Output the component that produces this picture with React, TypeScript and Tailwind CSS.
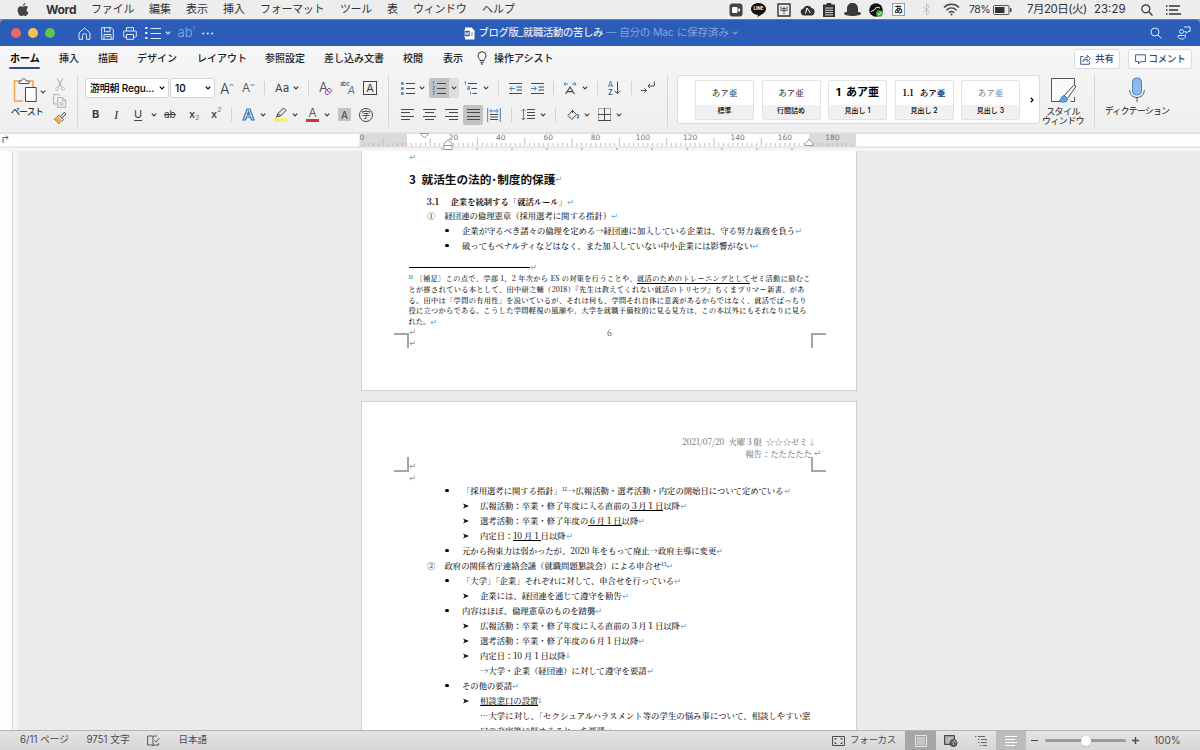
import type { ReactNode } from 'react';
import clsx from 'clsx';

interface BoxProps {
  className?: string;
  children?: ReactNode;
}

interface IconProps {
  w: number;
  h: number;
  className?: string;
  children: ReactNode;
}

const BLUE = '#3f83bd';

const Icon = ({ w, h, className, children }: IconProps) => (
  <svg
    width={w}
    height={h}
    viewBox={`0 0 ${w} ${h}`}
    fill="none"
    stroke="currentColor"
    strokeWidth={1}
    className={clsx('shrink-0', className)}
  >
    {children}
  </svg>
);

const Slot = ({ className, children }: BoxProps) => (
  <div className={clsx('flex h-full shrink-0 items-center whitespace-nowrap', className)}>{children}</div>
);

const Chevron = ({ className }: { className?: string }) => (
  <Icon w={6} h={4} className={className}>
    <path d="M.8.7 3 3 5.2.7" strokeWidth={1.2} />
  </Icon>
);

const Divider = () => <div className="h-[14px] w-px bg-[#d2d2d2]" />;

/* ---------- macOS menu bar ---------- */

const MenuBar = () => (
  <div className="flex h-[19px] shrink-0 items-center bg-[#ededed] pl-[17px] text-[11px] text-[#333]">
    <Slot className="w-[29px]">
      <svg width="12" height="14" viewBox="0 0 12 14" fill="#444">
        <path d="M8.3 0c.1 1.4-1 2.7-2.3 2.8C5.8 1.5 7 .2 8.3 0zM6.2 3.7c.6 0 1.3-.6 2.4-.6 1 0 1.9.5 2.4 1.3-2 1.2-1.7 4.1.5 4.9-.5 1.5-1.6 3.7-2.9 3.7-.8 0-1.2-.5-2.2-.5s-1.4.5-2.2.5C2.5 13 .6 9.9.6 7.2.6 4.6 2.2 3.2 3.9 3.2c1 0 1.7.5 2.3.5z" />
      </svg>
    </Slot>
    <Slot className="w-[45px] text-[12px] font-bold tracking-[-0.3px]">Word</Slot>
    <Slot className="w-[58px] tracking-[-0.2px]">ファイル</Slot>
    <Slot className="w-[37px]">編集</Slot>
    <Slot className="w-[37px]">表示</Slot>
    <Slot className="w-[37px]">挿入</Slot>
    <Slot className="w-[80px] tracking-[-0.3px]">フォーマット</Slot>
    <Slot className="w-[47px] tracking-[-0.4px]">ツール</Slot>
    <Slot className="w-[26px]">表</Slot>
    <Slot className="w-[69px] tracking-[-0.3px]">ウィンドウ</Slot>
    <Slot className="w-[247px]">ヘルプ</Slot>
    <Slot className="w-[22px]">
      <svg width="14" height="14" viewBox="0 0 14 14">
        <rect x=".5" y=".5" width="13" height="13" rx="3" fill="#444" />
        <rect x="3" y="4" width="5.5" height="6" rx="1.2" fill="#fff" />
        <path d="M9 6.5 11 5v4L9 7.8z" fill="#fff" />
      </svg>
    </Slot>
    <Slot className="relative w-[26px]">
      <svg width="15" height="14" viewBox="0 0 15 14">
        <path d="M7.5 0C3.4 0 0 2.6 0 5.9c0 3 2.7 5.4 6.3 5.8.7.2.4 1.3.3 2.3 3.3-1.7 8.4-4.5 8.4-8.1C15 2.6 11.6 0 7.5 0z" fill="#111" />
      </svg>
      <span className="absolute left-[2.5px] top-[6.5px] text-[4.5px] font-bold leading-none text-white">LINE</span>
    </Slot>
    <Slot className="w-[23px]">
      <Icon w={14} h={14}>
        <path d="M1 1h12v12H1z" strokeWidth={1.4} />
        <path d="M4 3.5v4M10 3.5v4M7 3.5V11M4 7.5h6M5 5.5h4" strokeWidth={0.8} />
      </Icon>
    </Slot>
    <Slot className="w-[23px]">
      <svg width="15" height="12" viewBox="0 0 15 12">
        <path d="M4 11.5a3.5 3.5 0 0 1-.6-6.9A4.5 4.5 0 0 1 11.5 4a3.8 3.8 0 0 1-.3 7.5z" fill="#333" />
        <path d="M5.5 9.5 7 4l3.5 5" stroke="#fff" fill="none" />
      </svg>
    </Slot>
    <Slot className="w-[21px]">
      <svg width="12" height="14" viewBox="0 0 12 14">
        <path d="M0 1.5h3.5a2.5 2 0 0 1 5 0H12V14H0z" fill="#333" />
        <path d="M2 5h8M2 7.3h8M2 9.6h8M2 11.9h8" stroke="#eee" strokeWidth=".9" />
      </svg>
    </Slot>
    <Slot className="w-[25px]">
      <svg width="17" height="13" viewBox="0 0 17 13" fill="#3a3a3a">
        <path d="M3 9V5.500C3 2 5.5 0 8.500 0S14 2 14 5.500V9c2 0 3 .5 3 1.500C17 12 13 13 8.500 13S0 12 0 10.500C0 9.500 1 9 3 9z" />
      </svg>
    </Slot>
    <Slot className="w-[23px]">
      <svg width="14" height="14" viewBox="0 0 14 14">
        <circle cx="7" cy="7" r="6.8" fill="#111" />
        <path d="M2 9c1-2 3-1 4-3s3-2 5-1" stroke="#fff" fill="none" />
        <circle cx="10.5" cy="10.5" r="3.3" fill="#44b04c" />
        <path d="m9 10.5 1.2 1.2 2-2.4" stroke="#fff" fill="none" />
      </svg>
    </Slot>
    <Slot className="w-[30px]">
      <div className="flex size-[13px] items-center justify-center border border-[#8aa0b8] bg-white text-[9px] font-medium leading-none text-black">あ</div>
    </Slot>
    <Slot className="w-[21px] text-[#c2c2c2]">
      <Icon w={9} h={13}>
        <path d="m1 3.5 6.5 6L4.500 12V1l3 2.500L1 9.500" />
      </Icon>
    </Slot>
    <Slot className="w-[26px] text-[#444]">
      <Icon w={17} h={13}>
        <path d="M1 4.500c4-4.300 11-4.300 15 0M3.500 7.200c3-3 7-3 10 0M6 9.700c1.500-1.500 3.500-1.500 5 0" strokeWidth={1.5} />
        <circle cx="8.5" cy="11.5" r="1" fill="currentColor" stroke="none" />
      </Icon>
    </Slot>
    <Slot className="w-[24px] text-[10.5px] tracking-[-0.5px]">78%</Slot>
    <Slot className="w-[34px]">
      <svg width="19" height="10" viewBox="0 0 19 10">
        <rect x=".5" y=".5" width="15.5" height="9" rx="1" fill="none" stroke="#555" />
        <path d="M2 2h9.500v6H2zM17 3.200h1.500v3.600H17z" fill="#333" />
      </svg>
    </Slot>
    <Slot className="w-[67px] text-[11.5px] tracking-[-0.5px]">7月20日(火)</Slot>
    <Slot className="w-[47px] text-[11.5px]">23:29</Slot>
    <Slot className="w-[25px]">
      <Icon w={12} h={12}>
        <circle cx="4.8" cy="4.8" r="4" strokeWidth={1.2} />
        <path d="m7.8 7.8 3.700 3.700" strokeWidth={1.3} />
      </Icon>
    </Slot>
    <Slot>
      <Icon w={15} h={10}>
        <path d="M0 1h1.500M0 5h1.500M0 9h1.500M3 1h11M3 5h9M3 9h12" strokeWidth={1.4} />
      </Icon>
    </Slot>
  </div>
);

/* ---------- window title bar ---------- */

const TitleBar = () => (
  <div className="flex h-[27px] shrink-0 items-center rounded-t-[5px] border-t border-[#5c7fc0] bg-[#2a5cb8] pl-[10.5px] text-[#dfe8f8]">
    <Slot className="w-[67px] gap-[6.5px]">
      <span className="size-[10.5px] rounded-full bg-[#ec6a5f]" />
      <span className="size-[10.5px] rounded-full bg-[#f4bf58]" />
      <span className="size-[10.5px] rounded-full bg-[#61c454]" />
    </Slot>
    <Slot className="w-[23px]">
      <Icon w={13} h={13}>
        <path d="M1 6 6.500.900 12 6v6.300H8.500V8.500a2 2 0 0 0-4 0v3.800H1z" />
      </Icon>
    </Slot>
    <Slot className="w-[22px]">
      <Icon w={13} h={13}>
        <path d="M.7.700h9.600l2 2v9.600H.7zM3.500.700v4h5.500v-4M3 12V7.500h7V12M4.500 9.500h4" />
      </Icon>
    </Slot>
    <Slot className="w-[22px]">
      <Icon w={14} h={13}>
        <path d="M3.500 4V.7h7V4M3.500 10H1.200L.7 9.500v-5L1.200 4h11.600l.5.500v5l-.5.500h-2.300M3.500 7.500h7v4.800h-7z" />
      </Icon>
    </Slot>
    <Slot className="w-[20px]">
      <Icon w={16} h={14}>
        <path d="M0 2h2.500M0 7h2.500M0 12h2.500" strokeWidth={2.2} />
        <path d="M5.500 2.500H16M5.500 7.500H16M5.500 12.500H16" />
      </Icon>
    </Slot>
    <Slot className="w-[13px]">
      <Chevron />
    </Slot>
    <Slot className="w-[24px] text-[13px] font-light text-[#93afe2]">
      ab<span className="mb-[9px] text-[6px] leading-none">1</span>
    </Slot>
    <Slot className="w-[262px]">
      <svg width="12" height="3" viewBox="0 0 12 3" fill="currentColor">
        <circle cx="1.3" cy="1.5" r="1.1" />
        <circle cx="5.8" cy="1.5" r="1.1" />
        <circle cx="10.3" cy="1.5" r="1.1" />
      </svg>
    </Slot>
    <Slot className="w-[15px]">
      <svg width="11" height="13" viewBox="0 0 11 13">
        <path d="M1 .5h6.500l3 3v9H1z" fill="#fff" />
        <path d="M0 3.500h6v6H0z" fill="#2a5cb8" stroke="#fff" strokeWidth=".6" />
        <path d="m1.300 5 .8 3 .9-2.500.9 2.500.8-3" fill="none" stroke="#fff" strokeWidth=".7" />
        <path d="M7 6h2M7 8h2" stroke="#2a5cb8" strokeWidth=".7" />
      </svg>
    </Slot>
    <Slot className="w-[127.5px] text-[10.3px] font-medium tracking-[-0.3px]">ブログ版_就職活動の苦しみ</Slot>
    <Slot className="w-[125.5px] text-[10.5px] tracking-[-0.15px] text-[#86a3db]">— 自分の Mac に保存済み</Slot>
    <Slot className="w-[418px] text-[#86a3db]">
      <Chevron />
    </Slot>
    <Slot className="w-[27px]">
      <Icon w={12} h={12}>
        <circle cx="5" cy="5" r="4" />
        <path d="m8 8 3.500 3.500" />
      </Icon>
    </Slot>
    <Slot>
      <Icon w={14} h={14}>
        <circle cx="4.5" cy="5.5" r="2" />
        <path d="M1 9.500h7.500v1c0 1.500-1.500 2.500-3.700 2.500S1 12 1 10.500zM7 1h6v4.500h-2L9 7.500v-2H7.500" />
      </Icon>
    </Slot>
  </div>
);

/* ---------- ribbon ---------- */

const Tabs = () => (
  <div className="flex h-[24px] shrink-0 items-center pl-[10px] text-[10px] font-medium text-[#222]">
    <Slot className="relative w-[49px] font-bold text-black">
      ホーム
      <span className="absolute bottom-[1px] left-[-1px] h-[2px] w-[31px] rounded-full bg-[#2a4d8f]" />
    </Slot>
    <Slot className="w-[39px]">挿入</Slot>
    <Slot className="w-[39px]">描画</Slot>
    <Slot className="w-[60px]">デザイン</Slot>
    <Slot className="w-[68px]">レイアウト</Slot>
    <Slot className="w-[59px]">参照設定</Slot>
    <Slot className="w-[79px]">差し込み文書</Slot>
    <Slot className="w-[40px]">校閲</Slot>
    <Slot className="w-[34px]">表示</Slot>
    <Slot className="w-[17px]">
      <Icon w={10} h={14}>
        <path d="M3 9.500C3 8 1 7 1 4.700a4 4 0 0 1 8 0C9 7 7 8 7 9.500zM3.300 11.300h3.400M3.800 13h2.400" strokeWidth={0.9} />
      </Icon>
    </Slot>
    <Slot className="w-[580px]">操作アシスト</Slot>
    <div className="mt-[3px] flex gap-[8px] self-start text-[9.5px] text-[#2d4b7c]">
      <div className="flex h-[20px] w-[46px] items-center justify-center gap-[4px] rounded-[3px] border border-[#dcdcdc] bg-white">
        <Icon w={11} h={11}>
          <path d="M3.500 2.500H.7v7.800h8.600V7.500M3 7.500c.2-2.800 2-4 4.300-4V1.200l3 3.300-3 3V5.300C5.500 5.300 4 6 3 7.500z" strokeWidth={0.9} />
        </Icon>
        共有
      </div>
      <div className="flex h-[20px] w-[64px] items-center justify-center gap-[3px] rounded-[3px] border border-[#dcdcdc] bg-white tracking-[-0.3px]">
        <Icon w={11} h={11}>
          <path d="M.6.800h9.800v6.800H5.500L3.500 10V7.600H.6z" strokeWidth={0.9} />
        </Icon>
        コメント
      </div>
    </div>
  </div>
);

const PasteGroup = () => (
  <div className="flex w-[78px] shrink-0 border-r border-[#d6d6d6] pl-[12px] text-[#444]">
    <div className="w-[41px] pt-[3px]">
      <div className="flex items-center gap-[2px]">
        <svg width="26" height="27" viewBox="0 0 26 27" fill="none">
          <path d="M8 3H2.500v20H11M17 3h4v6" stroke="#f0a04b" strokeWidth="1.5" />
          <path d="M7 5.500V3h2.500c0-1.400 1-2.200 2.200-2.200S14 1.600 14 3h3v2.500z" fill="#fff" stroke="#555" />
          <path d="M13.500 9.500h10.700v14H13.500z" fill="#fff" stroke="#444" />
        </svg>
        <Chevron />
      </div>
      <div className="mt-[1px] ml-[-1px] whitespace-nowrap text-[9px] leading-[12px] tracking-[-0.9px] text-black">ペースト</div>
    </div>
    <div className="flex flex-col items-center gap-[3px] pt-[3px]">
      <Icon w={10} h={13} className="text-[#aaa]">
        <path d="M2 0l4.700 9M8 0 3.300 9" />
        <circle cx="2" cy="10.7" r="1.6" stroke="#a9c8e4" />
        <circle cx="8" cy="10.7" r="1.6" stroke="#a9c8e4" />
      </Icon>
      <Icon w={14} h={14} className="text-[#b0b0b0]">
        <path d="M4.500 10H.600V.600h5l1.500 1.500M4.700 3.600h5l3 3v6.800h-8zM9.500 3.600v3.200h3.200M6.500 9h4M6.500 11h4" />
      </Icon>
      <Icon w={14} h={14}>
        <path d="m1 8 4-2.500L9 9.500 6 13z" fill="#f3a95a" stroke="#e08a2c" />
        <path d="m4.500 5.500 1.300-1.300 4.500 4.500L9 10M7.500 5.500l3.700-4.200 1.800 1.800-4 3.800" fill="#f3f3f3" />
      </Icon>
    </div>
  </div>
);

const FontGroup = () => (
  <div className="w-[311px] shrink-0 border-r border-[#d6d6d6] text-[#3a3a3a]">
    <div className="flex h-[26px] items-center pl-[7px]">
      <div className="flex h-[20px] w-[84px] items-center justify-between rounded-[3px] border border-[#d5d5d5] bg-white pr-[3px] pl-[4px] text-[10px] font-medium text-black">
        <span className="whitespace-nowrap tracking-[-0.2px]">游明朝 Regu...</span>
        <Chevron />
      </div>
      <div className="ml-[1px] flex h-[20px] w-[45px] items-center justify-between rounded-[3px] border border-[#d5d5d5] bg-white pr-[3px] pl-[4px] text-[10px] font-medium text-black">
        10
        <Chevron />
      </div>
      <Slot className="ml-[5px] w-[22px] text-[14px] font-light">
        A
        <Icon w={5} h={4} className="mb-[7px] text-[#3f83bd]">
          <path d="m.7 3 1.800-2 1.800 2" />
        </Icon>
      </Slot>
      <Slot className="w-[22px] text-[12px] font-light">
        A
        <Icon w={5} h={4} className="mb-[7px] text-[#3f83bd]">
          <path d="m.7 1 1.800 2 1.800-2" />
        </Icon>
      </Slot>
      <Slot className="w-[11px]">
        <Divider />
      </Slot>
      <Slot className="w-[18px] text-[11px] tracking-[0.5px]">Aa</Slot>
      <Slot className="w-[15px]">
        <Chevron />
      </Slot>
      <Slot className="w-[11px]">
        <Divider />
      </Slot>
      <Slot className="w-[21px] text-[13px] font-light">
        A
        <Icon w={9} h={8} className="mt-[5px] ml-[-4px] text-[#9442a8]">
          <path d="M1 5 5 1l3 2.500-4 4H2.500zM3 3l3 2.800" fill="#f3e4f7" />
        </Icon>
      </Slot>
      <Slot className="w-[23px]">
        <span className="mb-[8px] text-[6px] leading-none tracking-[-0.3px]">abc</span>
        <span className="mt-[4px] ml-[-2px] text-[11px] leading-none italic text-[#3f83bd]">A</span>
      </Slot>
      <Slot>
        <span className="flex size-[14px] items-center justify-center border border-[#444] text-[11px] leading-none">A</span>
      </Slot>
    </div>
    <div className="flex h-[27px] items-center pl-[14px] text-[12px]">
      <Slot className="w-[22px] text-[11px] font-bold">B</Slot>
      <Slot className="w-[20px] font-['Liberation_Serif'] text-[13px] italic">I</Slot>
      <Slot className="w-[17px]">
        <span className="border-b border-[#444] text-[11px] leading-[11px]">U</span>
      </Slot>
      <Slot className="w-[13px]">
        <Chevron />
      </Slot>
      <Slot className="w-[25px] text-[10px] line-through">ab</Slot>
      <Slot className="w-[22px] text-[11px] font-medium">
        x<span className="mt-[8px] text-[6.5px] text-[#3f83bd]">2</span>
      </Slot>
      <Slot className="w-[20px] text-[11px] font-medium">
        x<span className="mb-[8px] text-[6.5px] text-[#3f83bd]">2</span>
      </Slot>
      <Slot className="w-[11px]">
        <Divider />
      </Slot>
      <Slot className="w-[18px]">
        <Icon w={13} h={13} className="text-[#2f78b8]">
          <path d="M1 12 5 1h3l4 11H9.500l-1-2.800h-4l-1 2.800zM5.300 7h2.500L6.500 3.500z" fill="#d6e8f8" strokeWidth={1.2} />
        </Icon>
      </Slot>
      <Slot className="w-[14px]">
        <Chevron />
      </Slot>
      <Slot className="w-[18px]">
        <Icon w={13} h={15}>
          <path d="M0 11.500h13V15H0z" fill="#fbf15a" stroke="none" />
          <path d="m4 6.500 5.500-5.500 2.500 2.500L6.500 9zM4 6.500l-1 3 3.500-.5M3 9.500l-1.200 1.200" />
        </Icon>
      </Slot>
      <Slot className="w-[14px]">
        <Chevron />
      </Slot>
      <Slot className="w-[18px]">
        <div className="flex w-[13px] flex-col items-center">
          <span className="text-[12px] leading-[11px] font-light">A</span>
          <span className="mt-[1px] h-[3px] w-full bg-[#d0342c]" />
        </div>
      </Slot>
      <Slot className="w-[14px]">
        <Chevron />
      </Slot>
      <Slot className="w-[21px]">
        <span className="flex size-[13px] items-center justify-center bg-[#c4c4c4] text-[10px] leading-none">A</span>
      </Slot>
      <Slot>
        <span className="flex size-[14px] items-center justify-center rounded-full border border-[#444] text-[9px] leading-none">字</span>
      </Slot>
    </div>
  </div>
);

const Lines = ({ d }: { d: string }) => (
  <Icon w={13} h={13}>
    <path d={d} />
  </Icon>
);

const ParagraphGroup = () => (
  <div className="w-[279px] shrink-0 border-r border-[#d6d6d6] text-[#484848]">
    <div className="flex h-[26px] items-center pl-[12px]">
      <Slot className="w-[18px]">
        <Icon w={14} h={13}>
          <path d="M0 1.500h2.800M0 6.500h2.800M0 11.500h2.800" stroke={BLUE} strokeWidth={2.6} />
          <path d="M5 1.500h9M5 6.500h9M5 11.500h9" />
        </Icon>
      </Slot>
      <Slot className="w-[10px]">
        <Chevron />
      </Slot>
      <div className="flex h-[20px] w-[30px] rounded-[2px] bg-[#dedede]">
        <div className="flex w-[20px] items-center justify-center rounded-l-[2px] bg-[#c2c2c2]">
          <Icon w={14} h={14}>
            <path d="M.5 1 1.500.500v3M.5 5.500h2v1.500l-2 1.500h2M.5 10.500h2l-1 1.500 1 .3-.5 1.200H.5" stroke={BLUE} strokeWidth={0.8} />
            <path d="M5 2.500h9M5 7.500h9M5 12.500h9" />
          </Icon>
        </div>
        <div className="flex flex-1 items-center pl-[2px]">
          <Chevron />
        </div>
      </div>
      <Slot className="ml-[5px] w-[19px]">
        <Icon w={14} h={14}>
          <path d="m.5 1 1-.5v3M3.500 5.500h2v3h-2V7h2M6.500 11v2.500" stroke={BLUE} strokeWidth={0.9} />
          <path d="M4 2.500h9M7.500 7.500H13M8.500 12.500H13" />
        </Icon>
      </Slot>
      <Slot className="w-[15px]">
        <Chevron />
      </Slot>
      <Slot className="w-[11px]">
        <Divider />
      </Slot>
      <Slot className="w-[22px]">
        <Icon w={13} h={13}>
          <path d="M0 1.500h13M7.500 5H13M7.500 8H13M0 11.500h13" />
          <path d="M6 6.500H1M3 4.300.8 6.500 3 8.700" stroke={BLUE} />
        </Icon>
      </Slot>
      <Slot className="w-[22px]">
        <Icon w={13} h={13}>
          <path d="M0 1.500h13M7.500 5H13M7.500 8H13M0 11.500h13" />
          <path d="M0 6.500h5M3.200 4.300l2.200 2.200-2.200 2.200" stroke={BLUE} />
        </Icon>
      </Slot>
      <Slot className="w-[10px]">
        <Divider />
      </Slot>
      <Slot className="w-[19px]">
        <Icon w={14} h={13}>
          <path d="m2.500 12 4.500-7 4.500 7M4 9.700h6" strokeWidth={1.2} />
          <path d="M5 2H1M2.700.3 1 2l1.700 1.700M9 2h4M11.300.3 13 2l-1.700 1.700" stroke={BLUE} />
        </Icon>
      </Slot>
      <Slot className="w-[15px]">
        <Chevron />
      </Slot>
      <Slot className="w-[10px]">
        <Divider />
      </Slot>
      <Slot className="w-[24px]">
        <div className="flex w-[7px] flex-col items-center text-[7.5px] leading-[9px] font-medium">
          <span className="text-[#3f83bd]">A</span>
          <span className="mt-[-1px]">Z</span>
        </div>
        <Icon w={7} h={14}>
          <path d="M3.500.5v12M.8 9.800l2.700 2.900 2.700-2.900" />
        </Icon>
      </Slot>
      <Slot className="w-[10px]">
        <Divider />
      </Slot>
      <Slot>
        <Icon w={14} h={14}>
          <path d="M13.300.5V5H7M9.200 2.800 7 5l2.200 2.200M0 9.500h5.500M3.300 7.300l2.200 2.200-2.200 2.200" />
        </Icon>
      </Slot>
    </div>
    <div className="flex h-[27px] items-center pl-[12px]">
      <Slot className="w-[22px]">
        <Lines d="M0 1.500h13M0 4.500h9M0 8.500h13M0 11.500h9" />
      </Slot>
      <Slot className="w-[22px]">
        <Lines d="M0 1.500h13M2 4.500h9M0 8.500h13M2 11.500h9" />
      </Slot>
      <Slot className="w-[18px]">
        <Lines d="M0 1.500h13M4 4.500h9M0 8.500h13M4 11.500h9" />
      </Slot>
      <div className="mr-[4px] flex size-[20px] items-center justify-center rounded-[2px] bg-[#c2c2c2]">
        <Lines d="M0 1.500h13M0 4.500h13M0 8.500h13M0 11.500h13" />
      </div>
      <Slot className="w-[24px]">
        <Icon w={14} h={14}>
          <path d="M3 6.500h8M3 9h8M3 11.500h8" />
          <path d="M.7 0v14M13.300 0v14M3 3h8M4.500 1.300 2.800 3l1.700 1.700M9.500 1.300 11.200 3 9.500 4.700" stroke={BLUE} />
        </Icon>
      </Slot>
      <Slot className="w-[10px]">
        <Divider />
      </Slot>
      <Slot className="w-[19px]">
        <Icon w={14} h={13}>
          <path d="M2.500 1v11M.5 3l2-2 2 2M.5 10l2 2 2-2" stroke={BLUE} />
          <path d="M6 1.500h8M6 4.500h8M6 7.500h8M6 10.500h8" />
        </Icon>
      </Slot>
      <Slot className="w-[15px]">
        <Chevron />
      </Slot>
      <Slot className="w-[12px]">
        <Divider />
      </Slot>
      <Slot className="w-[17px]">
        <Icon w={12} h={12}>
          <path d="m1 6.500 4.500-5 4 4-4.500 5zM5.500 4V.500" />
          <path d="M10 5c1.500 1 1.500 3 .5 4.500" stroke={BLUE} strokeWidth={1.5} />
        </Icon>
      </Slot>
      <Slot className="w-[14px]">
        <Chevron />
      </Slot>
      <Slot className="w-[18px]">
        <Icon w={13} h={13}>
          <path d="M.5.500h12v12H.5z" strokeDasharray="1 1" strokeWidth={0.9} />
          <path d="M6.500 0v13M0 6.500h13M0 12.500h13" />
        </Icon>
      </Slot>
      <Slot>
        <Chevron />
      </Slot>
    </div>
  </div>
);

const serif = "font-['Noto_Serif_CJK_JP','Liberation_Serif','Noto_Sans_CJK_JP',serif]";

const styles = [
  { name: '標準', preview: 'あア亜', className: `text-[8.5px] font-medium text-[#222] ${serif}` },
  { name: '行間詰め', preview: 'あア亜', className: `text-[8.5px] font-medium text-[#222] ${serif}` },
  { name: '見出し 1', preview: '1  あア亜', className: 'text-[11px] font-bold text-black' },
  { name: '見出し 2', preview: '1.1   あア亜', className: `text-[8.5px] font-bold text-black ${serif}` },
  { name: '見出し 3', preview: 'あア亜', className: `text-[8.5px] font-medium text-[#777] ${serif}` },
];

const StyleGallery = () => (
  <div className="ml-[9px] flex h-[49px] w-[363px] shrink-0 items-center rounded-[3px] border border-[#dadada] bg-white pl-[17px]">
    <div className="flex gap-[7.5px]">
      {styles.map(style => (
        <div key={style.name} className="flex h-[40px] w-[59px] flex-col overflow-hidden rounded-[2px] border border-[#e3e3e3]">
          <div className={clsx('flex flex-1 items-center justify-center leading-none whitespace-pre', style.className)}>
            {style.preview}
          </div>
          <div className="flex h-[14px] items-center justify-center bg-[#f1f1f1] text-[7px] font-medium whitespace-nowrap text-black">
            {style.name}
          </div>
        </div>
      ))}
    </div>
    <Icon w={4} h={6} className="ml-[10px]">
      <path d="M.7.800 3 3 .7 5.200" strokeWidth={1.2} />
    </Icon>
  </div>
);

const Ribbon = () => (
  <div className="flex h-[62px] shrink-0">
    <div className="mt-[5px] flex h-[52px]">
      <PasteGroup />
      <FontGroup />
      <ParagraphGroup />
      <StyleGallery />
      <div className="flex w-[55px] shrink-0 flex-col items-center border-r border-[#d6d6d6] pt-[2px] pr-[8px] text-[9px] leading-[9px] tracking-[-0.6px] whitespace-nowrap text-[#222]">
        <svg width="27" height="27" viewBox="0 0 27 27" fill="none">
          <path d="M11 24.500H1.500v-23h23v8M24.500 20v4.500h-4" fill="#fafafa" stroke="#555" />
          <path d="m14 19 9.500-10.500c1-1 2.800 0 2 1.500L17.500 21.500z" fill="#fff" stroke="#444" />
          <path d="M14 18.500c-3 .5-2.500 4-5 5.500 3.500 1.800 9 1.300 8.500-2.500z" fill="#6aa5dc" stroke="#3a78b4" />
        </svg>
        <span className="mt-[3px]">スタイル</span>
        <span>ウィンドウ</span>
      </div>
      <div className="flex w-[84px] shrink-0 flex-col items-center pt-[2px] text-[9px] tracking-[-0.85px] whitespace-nowrap text-[#222]">
        <svg width="16" height="27" viewBox="0 0 16 27" fill="none">
          <rect x="3.5" y="1" width="9" height="17" rx="4" fill="#8bbbe8" stroke="#4a86bf" />
          <path d="M.7 13c0 10 14.600 10 14.600 0M8 21v4" stroke="#555" />
        </svg>
        <span className="mt-[1px] leading-[12px]">ディクテーション</span>
      </div>
    </div>
  </div>
);

/* ---------- ruler ---------- */

const Ruler = () => (
  <svg width="1200" height="19" viewBox="0 0 1200 19" className="shrink-0">
    <path d="M0 0h1200v19H0z" fill="#f5f5f5" />
    <path d="M0 2h1200v12.500H0z" fill="#fefefe" />
    <path d="M0 1h1200" stroke="#cfcfcf" />
    <path d="M0 15h1200" stroke="#dcdcdc" />
    <path d="M359.500 2H407v13h-47.500zM809 2h47v13h-47z" fill="#dadada" />
    <path d="M3 11V5.500h5M6 3.500l2 2-2 2" stroke="#666" fill="none" />
    {Array.from({ length: 104 }, (_, i) => 364 + i * 4.73).map((x, i) => (
      <path key={x} d={`M${x} ${i % 10 === 4 ? 6 : 11}V14`} stroke="#bbb" strokeWidth=".9" />
    ))}
    {Array.from({ length: 11 }, (_, i) => (
      <path key={i} d={`M${442 + i * 35} 16v2`} stroke="#999" />
    ))}
    <g fill="#777" fontSize="7.5" textAnchor="middle" fontFamily="DejaVu Sans">
      <text x="362" y="8">0</text>
      {[20, 40, 60, 80, 100, 120, 140, 160, 180].map((n, i) => (
        <text key={n} x={453.5 + i * 47.35} y="8">{n}</text>
      ))}
    </g>
    <g fill="#fff" stroke="#999">
      <path d="M420 1.500h9L424.500 6z" />
      <path d="M444 17.500v-6l4-3.500 4 3.500v6zM444 13.500h8" />
      <path d="M805 13.500v-2l4-4 4 4v2z" />
    </g>
  </svg>
);

/* ---------- document ---------- */

const Ret = ({ className = 'text-[#6aaedc]' }: { className?: string }) => (
  <Icon w={6} h={6} className={clsx('inline-block', className)}>
    <path d="M5.300.800v2.700H1M2.600 1.800.9 3.500l1.700 1.700" strokeWidth={0.9} />
  </Icon>
);

const Down = () => (
  <Icon w={4} h={7} className="inline-block text-[#6aaedc]">
    <path d="M2 .500v5.500M.5 4.500 2 6l1.500-1.500" strokeWidth={0.9} />
  </Icon>
);

const Line = ({ className, children }: BoxProps) => (
  <div className={clsx('flex h-[15px] items-center whitespace-pre', className)}>{children}</div>
);

const Bullet = ({ children }: BoxProps) => (
  <Line className="pl-[83px]">
    <span className="mr-[13.5px] size-[3.5px] rounded-full bg-black" />
    {children}
  </Line>
);

const Arrow = ({ children }: BoxProps) => (
  <Line className="pl-[100.5px]">
    <svg width="6" height="6" viewBox="0 0 6 6" className="mr-[11.5px] shrink-0">
      <path d="M0 .500 6 3 0 5.500 1.500 3z" fill="#111" />
    </svg>
    {children}
  </Line>
);

const Indented = ({ children }: BoxProps) => <Line className="pl-[118px]">{children}</Line>;

const Numbered = ({ mark, children }: BoxProps & { mark: string }) => (
  <Line className="pl-[65px]">
    <span className="w-[17.5px]">{mark}</span>
    {children}
  </Line>
);

const U = ({ children }: BoxProps) => <span className="border-b border-black leading-[9px]">{children}</span>;

const Corner = ({ className }: BoxProps) => <span className={clsx('absolute size-[15px] border-[#a5a5a5]', className)} />;

const PageOne = () => (
  <div className="relative h-[240px] w-[496px] shrink-0 border-x border-b border-[#cfcfcf] bg-white">
    <div className="h-[20px] pl-[47px] leading-[9px]">
      <Ret />
    </div>
    <Line className="pl-[47px] font-['Noto_Sans_CJK_JP',sans-serif] text-[11.65px] font-bold">
      <span className="w-[12.5px]">3</span>就活生の法的<span className="w-[5.8px]">･</span>制度的保護
      <Ret />
    </Line>
    <Line className="mt-[8px] pl-[64.5px] font-bold">
      <span className="w-[24px] text-[9px]">3.1</span>企業を統制する「就活ルール」<Ret />
    </Line>
    <div className="-mt-px">
      <Numbered mark="①">
        経団連の倫理憲章（採用選考に関する指針）<Ret />
      </Numbered>
    </div>
    <Bullet>
      企業が守るべき諸々の倫理を定める→経団連に加入している企業は、守る努力義務を負う<Ret />
    </Bullet>
    <Bullet>
      破ってもペナルティなどはなく、また加入していない中小企業には影響がない<Ret />
    </Bullet>
    <div className="mt-[9px] flex h-[10px] items-center pl-[47px]">
      <span className="h-px w-[121px] bg-black" />
      <Ret />
    </div>
    <div className="mt-[1px] ml-[46.5px] w-[402px] text-[7.2px] leading-[10.8px] whitespace-nowrap">
      <div className="h-[10.8px] [text-align-last:justify]">
        <span className="relative top-[-2px] text-[5px] leading-none">11</span> 〔補足〕この点で、学部 1，2 年次から ES の対策を行うことや、<U>就活のためのトレーニングとして</U>ゼミ活動に励むこ
      </div>
      <div className="h-[10.8px] w-[396px] [text-align-last:justify]">とが推されている本として、田中研之輔（2018）『先生は教えてくれない就活のトリセツ』ちくまプリマー新書、があ</div>
      <div className="h-[10.8px] w-[398px] [text-align-last:justify]">る。田中は「学問の有用性」を説いているが、それは何も、学問それ自体に意義があるからではなく、就活でばっちり</div>
      <div className="h-[10.8px] w-[398px] [text-align-last:justify]">役に立つからである。こうした学問軽視の風潮や、大学を就職予備校的に見る見方は、この本以外にもそれなりに見ら</div>
      <div className="h-[10.8px]">
        れた。<Ret />
      </div>
    </div>
    <div className="flex h-[11px] items-center pl-[47px]">
      <Ret className="text-[#999]" />
      <span className="ml-[192px] text-[8.5px] text-[#666]">6</span>
    </div>
    <div className="flex h-[11px] items-center pl-[47px]">
      <Ret className="text-[#999]" />
    </div>
    <Corner className="top-[182px] left-[32px] border-t-2 border-r-2" />
    <Corner className="top-[182px] left-[449px] border-t-2 border-l-2" />
  </div>
);

const PageTwo = () => (
  <div className="relative mt-[10px] h-[340px] w-[496px] shrink-0 border-x border-t border-[#cfcfcf] bg-white pt-[33px]">
    <div className="flex h-[12px] items-center justify-end pr-[40px] whitespace-pre text-[#777]">
      <span className="tracking-[-0.1px]">2021/07/20</span>  火曜３限  ☆☆☆ゼミ↓
    </div>
    <div className="flex h-[12px] items-center justify-end pr-[36px] whitespace-pre text-[#777]">
      報告：たたたたた <Ret className="text-[#999]" />
    </div>
    <div className="mt-px flex h-[12px] items-center pl-[47px]">
      <Ret className="text-[#999]" />
    </div>
    <div className="flex h-[11px] items-center pl-[47px]">
      <Ret className="text-[#999]" />
    </div>
    <Bullet>
      「採用選考に関する指針」<span className="mb-[4px] text-[5px]">12</span>→広報活動・選考活動・内定の開始日について定めている<Ret />
    </Bullet>
    <Arrow>
      広報活動：卒業・修了年度に入る直前の<U>３月１日</U>以降<Ret />
    </Arrow>
    <Arrow>
      選考活動：卒業・修了年度の<U>６月１日</U>以降<Ret />
    </Arrow>
    <Arrow>
      内定日：<U>10 月 1 </U>日以降<Ret />
    </Arrow>
    <Bullet>
      元から拘束力は弱かったが、2020 年をもって廃止→政府主導に変更<Ret />
    </Bullet>
    <Numbered mark="②">
      政府の関係省庁連絡会議（就職問題懇談会）による申合せ<span className="mb-[4px] text-[5px]">13</span>
      <Ret />
    </Numbered>
    <Bullet>
      「大学」「企業」それぞれに対して、申合せを行っている<Ret />
    </Bullet>
    <Arrow>
      企業には、経団連を通じて遵守を勧告<Ret />
    </Arrow>
    <Bullet>
      内容はほぼ、倫理憲章のものを踏襲<Ret />
    </Bullet>
    <Arrow>
      広報活動：卒業・修了年度に入る直前の３月１日以降<Ret />
    </Arrow>
    <Arrow>
      選考活動：卒業・修了年度の６月１日以降<Ret />
    </Arrow>
    <Arrow>
      内定日：10 月 1 日以降<Down />
    </Arrow>
    <Indented>
      →大学・企業（経団連）に対して遵守を要請<Ret />
    </Indented>
    <Bullet>
      その他の要請<Ret />
    </Bullet>
    <Arrow>
      <U>相談窓口の設置</U>
      <Down />
    </Arrow>
    <Indented>
      <span className="tracking-[0.08px]">…大学に対し、「セクシュアルハラスメント等の学生の悩み事について、相談しやすい窓</span>
    </Indented>
    <Indented>
      口の充実等に努めること」を要請<Ret />
    </Indented>
    <Corner className="top-[55px] left-[32px] border-r-2 border-b-2" />
    <Corner className="top-[55px] left-[449px] border-b-2 border-l-2" />
  </div>
);

const Document = () => (
  <div className="flex min-h-0 flex-1 overflow-hidden bg-[#ebebeb]">
    <div className="w-[13px] shrink-0 border-r border-[#ddd] bg-[#fdfdfd]" />
    <div className="w-[5px] shrink-0 bg-[#f4f4f4]" />
    <div className={clsx('ml-[343px] flex flex-col text-[8.33px] font-medium text-[#111]', serif)}>
      <PageOne />
      <PageTwo />
    </div>
  </div>
);

/* ---------- status bar ---------- */

const StatusBar = () => (
  <div className="flex h-[20px] shrink-0 items-center border-t border-[#b4b4b4] bg-gradient-to-b from-[#e4e4e4] to-[#d6d6d6] pl-[20px] text-[9.5px] text-[#4a4a4a]">
    <Slot className="w-[66.5px] text-[9.7px]">6/11 ページ</Slot>
    <Slot className="w-[60px] text-[9.7px]">9751 文字</Slot>
    <Slot className="w-[32px]">
      <Icon w={13} h={12}>
        <path d="M6 10.500V1.500L5 1H.600v9H5l1 1 1-1h4.500V8M6 1.500 7 1h3M7.500 5.500 9 7l3.500-4" strokeWidth={0.9} />
      </Icon>
    </Slot>
    <Slot className="w-[653.5px]">日本語</Slot>
    <Slot className="w-[18px]">
      <Icon w={13} h={10}>
        <path d="M.5.500h12v9H.5z" />
        <path d="M3 4V2.500h1.500M8.500 2.500H10V4M10 6v1.500H8.500M4.500 7.500H3V6" />
      </Icon>
    </Slot>
    <Slot className="w-[55px] tracking-[-0.3px]">フォーカス</Slot>
    <div className="flex h-full w-[31px] items-center justify-center bg-[#a6a6a6] text-[#eee]">
      <Icon w={12} h={12}>
        <path d="M.5.500h11v11H.5zM2 3h8M2 5h8M2 7h8M2 9h8" strokeWidth={0.9} />
      </Icon>
    </div>
    <Slot className="ml-[8px] w-[31px]">
      <Icon w={14} h={12}>
        <path d="M.5.500h10v9H.5z" fill="#999" />
        <path d="M2 3h7M2 5h5M2 7h4" stroke="#ddd" />
        <circle cx="9.5" cy="8" r="3.5" fill="#555" />
        <path d="M7.500 7c2 0 2 1 2 3M10 5c0 2 1 2 2.500 2" stroke="#ddd" />
      </Icon>
    </Slot>
    <Slot className="w-[21px]">
      <Icon w={13} h={11}>
        <path d="M0 1.500h1.500M3 1.500h7M3 4.500h1.500M6 4.500h6M3 7.500h1.500M6 7.500h6M5 10.500h1M7.500 10.500H12" strokeWidth={0.8} />
      </Icon>
    </Slot>
    <div className="flex h-full w-[30px] items-center justify-center bg-[#bcbcbc] text-white">
      <Icon w={12} h={11}>
        <path d="M0 1.500h12M0 4.500h10M0 7.500h12M0 10.500h10" />
      </Icon>
    </div>
    <Slot className="ml-[5px] w-[14px]">
      <span className="h-[1.5px] w-[7px] bg-[#444]" />
    </Slot>
    <div className="relative mr-[6px] h-[2.5px] w-[81px] rounded-full bg-[#9a9a9a]">
      <span className="absolute top-[-3.5px] left-[36px] size-[10px] rounded-full bg-white shadow-sm" />
    </div>
    <Slot className="w-[22px]">
      <Icon w={7} h={7}>
        <path d="M0 3.500h7M3.500 0v7" strokeWidth={1.4} />
      </Icon>
    </Slot>
    <Slot className="text-[10px]">100%</Slot>
  </div>
);

const App = () => (
  <div
    lang="ja"
    className="flex h-[750px] w-[1200px] flex-col overflow-hidden bg-[#8d9099] font-['Inter','Noto_Sans_CJK_JP',sans-serif] leading-normal"
  >
    <MenuBar />
    <TitleBar />
    <div className="shrink-0 bg-gradient-to-b from-[#f6f6f6] to-[#efefef]">
      <Tabs />
      <Ribbon />
    </div>
    <Ruler />
    <Document />
    <StatusBar />
  </div>
);

export default App;
